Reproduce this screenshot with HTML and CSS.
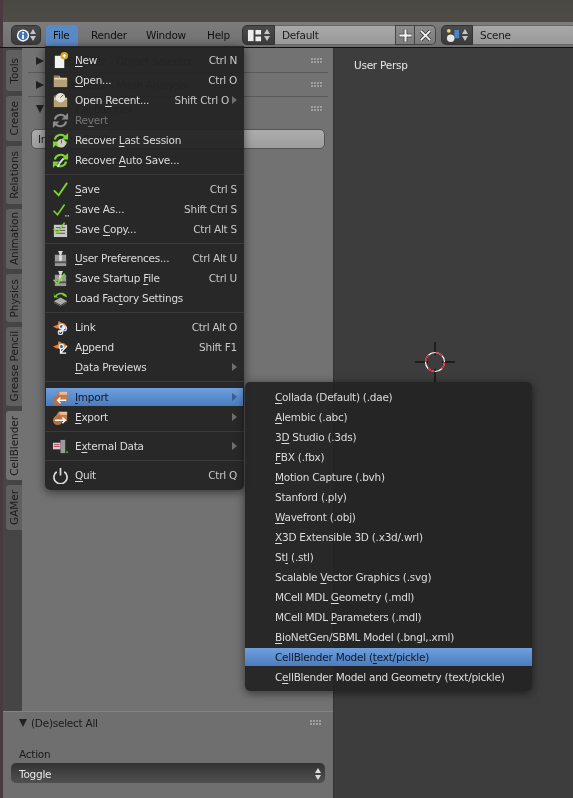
FILE: index.html
```html
<!DOCTYPE html>
<html lang="en">
<head>
  <meta charset="UTF-8">
  <title>Blender - File Import menu</title>
  <link rel="stylesheet" href="styles.css">
</head>
<body>
  <!-- shared icons -->
  <svg class="defs" width="0" height="0">
    <defs>
      <symbol id="check" viewBox="0 0 18 18"><path d="M2 10l5 5 9-13" fill="none" stroke="#7bd52c" stroke-width="2"/></symbol>
      <symbol id="folder" viewBox="0 0 18 18"><path d="M2 4h6l1 2h7v10H2z" fill="#e3d2a6"/><path d="M2 8h14v8H2z" fill="#b5a178"/><path d="M2 4h6v2H2z" fill="#8c7c5c"/></symbol>
      <symbol id="arrows" viewBox="0 0 18 18"><path d="M3 8A6.5 6.5 0 0 1 14 5" fill="none" stroke="currentColor" stroke-width="2.2"/><path d="M17 1v7h-7z" fill="currentColor"/><path d="M15 10A6.5 6.5 0 0 1 4 13" fill="none" stroke="currentColor" stroke-width="2.2"/><path d="M1 17v-7h7z" fill="currentColor"/></symbol>
      <symbol id="device" viewBox="0 0 18 18"><path d="M3 5h12v12H3z" fill="#9a9a9a"/><path d="M3 12h12v2H3z" fill="#555"/><path d="M7 1l2 5 2-5M8 6h2v5H8z" stroke="#ddd" fill="#ddd"/></symbol>
      <symbol id="blend" viewBox="0 0 18 18"><path d="M1 8l5-2 1-4 3 2c4 0 6 3 5 6H5z" fill="#e87d2b"/><circle cx="10" cy="8" r="3" fill="#eee"/><circle cx="10" cy="8" r="1.6" fill="#2f5f9e"/></symbol>
      <symbol id="box" viewBox="0 0 18 18"><path d="M3 9l4-6h9v10H7z" fill="#c77b4a"/><path d="M8 3h8v3H8z" fill="#eac09c"/><circle cx="6" cy="12" r="5" fill="#b8703f"/></symbol>
    </defs>
  </svg>

  <div class="top-strip"></div>

  <header class="header">
    <div class="switch switch-first">
      <svg class="sw-icon" viewBox="0 0 16 16"><circle cx="8" cy="8" r="7" fill="#fff"/><circle cx="8" cy="8" r="5.4" fill="#3f74b5"/><path d="M7 7h2v5H7zM7 4h2v2H7z" fill="#fff"/></svg>
      <span class="updown"><i class="up"></i><i class="down"></i></span>
    </div>
    <nav class="topmenu">
      <span class="topitem active">File</span>
      <span class="topitem item-render">Render</span>
      <span class="topitem item-window">Window</span>
      <span class="topitem item-help">Help</span>
    </nav>
    <div class="switch switch-layout">
      <svg class="sw-icon" viewBox="0 0 16 16"><path d="M1 2h6v12H1z" fill="#eee"/><path d="M9 2h6v5H9zM9 9h6v5H9z" fill="#eee"/></svg>
      <span class="updown"><i class="up"></i><i class="down"></i></span>
    </div>
    <div class="field field-layout">Default</div>
    <div class="square">
      <svg viewBox="0 0 14 14"><path d="M5.5 0h3v5.5H14v3H8.500V14h-3V8.500H0v-3h5.500z" fill="#f2f2f2" stroke="#333" stroke-width=".7"/></svg>
    </div>
    <div class="square square-end">
      <svg viewBox="0 0 14 14"><path d="M2 2l10 10M12 2L2 12" stroke="#333" stroke-width="3.6"/><path d="M2 2l10 10M12 2L2 12" stroke="#f2f2f2" stroke-width="2"/></svg>
    </div>
    <div class="switch switch-scene">
      <svg class="sw-icon" viewBox="0 0 16 16"><circle cx="3" cy="3" r="2" fill="#e6df6a"/><path d="M9 2h5v9H9z" fill="#4a86d0"/><circle cx="5" cy="11" r="4" fill="#e8e8e8"/></svg>
      <span class="updown"><i class="up"></i><i class="down"></i></span>
    </div>
    <div class="field field-scene">Scene</div>
  </header>

  <main class="workspace">
    <div class="edge"></div>
    <section class="left">
      <div class="upper">
        <div class="tabs">
          <div class="tab tab-tools"><span>Tools</span></div>
          <div class="tab tab-create"><span>Create</span></div>
          <div class="tab tab-relations"><span>Relations</span></div>
          <div class="tab tab-animation"><span>Animation</span></div>
          <div class="tab tab-physics"><span>Physics</span></div>
          <div class="tab tab-grease"><span>Grease Pencil</span></div>
          <div class="tab tab-cell current"><span>CellBlender</span></div>
          <div class="tab tab-gamer"><span>GAMer</span></div>
        </div>
        <div class="panels">
          <div class="panel-row">
            <i class="tri-right"></i><span>CellBlender - Object Selector</span><b class="grip"></b>
          </div>
          <div class="panel-row">
            <i class="tri-right"></i><span>CellBlender - Mesh Analysis</span><b class="grip"></b>
          </div>
          <div class="panel-row no-line">
            <i class="tri-down"></i><span class="cell-title">CellBlender</span><b class="grip"></b>
          </div>
          <div class="init-btn">Initialize CellBlender</div>
        </div>
      </div>
      <div class="redo">
        <div class="redo-title"><i class="tri-down"></i><span>(De)select All</span><b class="grip"></b></div>
        <div class="redo-label">Action</div>
        <div class="select">
          <span>Toggle</span>
          <span class="updown light"><i class="up"></i><i class="down"></i></span>
        </div>
      </div>
    </section>
    <section class="viewport">
      <div class="persp">User Persp</div>
      <svg class="cursor3d" width="40" height="40" viewBox="0 0 40 40">
        <path d="M20 0v13M20 27v13M0 20h13M27 20h13" stroke="#000"/>
        <circle cx="20" cy="20" r="9.5" fill="none" stroke="#fff" stroke-width="1.2"/>
        <circle cx="20" cy="20" r="9.5" fill="none" stroke="#e0102c" stroke-width="1.2" stroke-dasharray="7.5 7.5"/>
      </svg>
    </section>
  </main>

  <div class="menu file-menu">
    <div class="row"><svg class="ico" viewBox="0 0 18 18"><path d="M3 4h10v13H3z" fill="#f2f2f2"/><circle cx="13" cy="4" r="4" fill="#d9a520"/><path d="M12.400 2h1.200v1.400H15v1.200h-1.400V6h-1.200V4.600H11V3.400h1.400z" fill="#fff"/></svg><span class="lbl"><u>N</u>ew</span><span class="key">Ctrl N</span></div>
    <div class="row"><svg class="ico"><use href="#folder"/></svg><span class="lbl"><u>O</u>pen...</span><span class="key">Ctrl O</span></div>
    <div class="row"><svg class="ico" viewBox="0 0 18 18"><use href="#folder" width="18" height="18"/><circle cx="9" cy="6" r="5" fill="#e8e4da"/><path d="M9 6l3-3" stroke="#a33"/></svg><span class="lbl">Open <u>R</u>ecent...</span><span class="key">Shift Ctrl O</span><i class="more"></i></div>
    <div class="row dim"><svg class="ico grey"><use href="#arrows"/></svg><span class="lbl">Re<u>v</u>ert</span></div>
    <div class="row"><svg class="ico green" viewBox="0 0 18 18"><use href="#arrows" width="18" height="18"/><circle cx="10" cy="12" r="4.500" fill="#cfcac0"/><path d="M10 12V8.500" stroke="#a33"/></svg><span class="lbl">Recover <u>L</u>ast Session</span></div>
    <div class="row"><svg class="ico green" viewBox="0 0 18 18"><use href="#arrows" width="18" height="18"/><path d="M12 7l-4 5-2 4" stroke="#ddd" stroke-width="2" fill="none"/></svg><span class="lbl">Recover <u>A</u>uto Save...</span></div>
    <div class="sep"></div>
    <div class="row"><svg class="ico"><use href="#check"/></svg><span class="lbl"><u>S</u>ave</span><span class="key">Ctrl S</span></div>
    <div class="row"><svg class="ico" viewBox="0 0 18 18"><use href="#check" width="15" height="15" y="2"/><path d="M14 15h1.400v1.400H14zM16.600 15H18v1.400h-1.400z" fill="#ddd"/></svg><span class="lbl">Save As...</span><span class="key">Shift Ctrl S</span></div>
    <div class="row"><svg class="ico" viewBox="0 0 18 18"><path d="M2 4h14v13H2z" fill="#c9c9c9"/><path d="M4 7h10M4 10h10M4 13h10" stroke="#555"/><use href="#check" width="15" height="15"/></svg><span class="lbl">Save <u>C</u>opy...</span><span class="key">Ctrl Alt S</span></div>
    <div class="sep"></div>
    <div class="row"><svg class="ico"><use href="#device"/></svg><span class="lbl"><u>U</u>ser Preferences...</span><span class="key">Ctrl Alt U</span></div>
    <div class="row"><svg class="ico" viewBox="0 0 18 18"><use href="#device" width="18" height="18"/><use href="#check" width="15" height="15" y="2"/></svg><span class="lbl">Save Startup <u>F</u>ile</span><span class="key">Ctrl U</span></div>
    <div class="row"><svg class="ico green" viewBox="0 0 18 18"><path d="M2 12l7-4 7 4-7 4z" fill="#aaa"/><path d="M2 13l7 4 7-4" stroke="#666" fill="none"/><path d="M3 7c1-4 8-6 12-2l1 3-4-2-1-1c-2-1-5 0-6 2l2 1H2V3z" fill="currentColor"/></svg><span class="lbl">Load Fac<u>t</u>ory Settings</span></div>
    <div class="sep"></div>
    <div class="row"><svg class="ico" viewBox="0 0 18 18"><use href="#blend" width="18" height="18"/><path d="M8 14l6-5" stroke="#fff" stroke-width="2"/><circle cx="13" cy="10" r="2.400" fill="none" stroke="#dde" stroke-width="1.200"/><circle cx="9" cy="14" r="2.400" fill="none" stroke="#dde" stroke-width="1.200"/></svg><span class="lbl">Link</span><span class="key">Ctrl Alt O</span></div>
    <div class="row"><svg class="ico" viewBox="0 0 18 18"><use href="#blend" width="18" height="18"/><path d="M16 7l-7 8M9 10v5h6" stroke="#fff" stroke-width="1.400" fill="none"/></svg><span class="lbl">A<u>p</u>pend</span><span class="key">Shift F1</span></div>
    <div class="row"><span class="ico"></span><span class="lbl"><u>D</u>ata Previews</span><i class="more"></i></div>
    <div class="sep tall"></div>
    <div class="row hl"><svg class="ico" viewBox="0 0 18 18"><use href="#box" width="18" height="18"/><path d="M15 12H6M9 9l-3 3 3 3" stroke="#fff" stroke-width="1.600" fill="none"/></svg><span class="lbl"><u>I</u>mport</span><i class="more"></i></div>
    <div class="row"><svg class="ico" viewBox="0 0 18 18"><use href="#box" width="18" height="18"/><path d="M3 12h11M11 9l3 3-3 3" stroke="#fff" stroke-width="1.600" fill="none"/></svg><span class="lbl"><u>E</u>xport</span><i class="more"></i></div>
    <div class="sep"></div>
    <div class="row"><svg class="ico" viewBox="0 0 18 18"><path d="M1 5h8v7H1z" fill="#cfcfcf"/><path d="M2 7h6M2 9h6" stroke="#b5465a"/><path d="M9 2h5v14H9z" fill="#9a9a9a"/><path d="M15 14h2v2h-2z" fill="#3fae3f"/></svg><span class="lbl">E<u>x</u>ternal Data</span><i class="more"></i></div>
    <div class="sep"></div>
    <div class="row"><svg class="ico" viewBox="0 0 18 18"><path d="M5 5a7 7 0 1 0 8 0" fill="none" stroke="#ddd" stroke-width="1.800"/><path d="M9 1v8" stroke="#ddd" stroke-width="1.800"/></svg><span class="lbl"><u>Q</u>uit</span><span class="key">Ctrl Q</span></div>
  </div>

  <div class="menu import-menu">
    <div class="row"><span class="lbl"><u>C</u>ollada (Default) (.dae)</span></div>
    <div class="row"><span class="lbl"><u>A</u>lembic (.abc)</span></div>
    <div class="row"><span class="lbl">3<u>D</u> Studio (.3ds)</span></div>
    <div class="row"><span class="lbl"><u>F</u>BX (.fbx)</span></div>
    <div class="row"><span class="lbl"><u>M</u>otion Capture (.bvh)</span></div>
    <div class="row"><span class="lbl">Stanford (.ply)</span></div>
    <div class="row"><span class="lbl"><u>W</u>avefront (.obj)</span></div>
    <div class="row"><span class="lbl"><u>X</u>3D Extensible 3D (.x3d/.wrl)</span></div>
    <div class="row"><span class="lbl">St<u>l</u> (.stl)</span></div>
    <div class="row"><span class="lbl">Scalable <u>V</u>ector Graphics (.svg)</span></div>
    <div class="row"><span class="lbl">MCell MDL <u>G</u>eometry (.mdl)</span></div>
    <div class="row"><span class="lbl">MCell MDL <u>P</u>arameters (.mdl)</span></div>
    <div class="row"><span class="lbl"><u>B</u>ioNetGen/SBML Model (.bngl,.xml)</span></div>
    <div class="row hl"><span class="lbl">CellBlender Model (<u>t</u>ext/pickle)</span></div>
    <div class="row"><span class="lbl">C<u>e</u>llBlender Model and Geometry (text/pickle)</span></div>
  </div>
</body>
</html>
```

FILE: styles.css
```css
* {
  box-sizing: border-box;
}

body {
  position: relative;
  width: 573px;
  height: 798px;
  margin: 0;
  overflow: hidden;
  background-color: #3d3d3d;
  font-family: "DejaVu Sans", sans-serif;
  font-size: 10.5px;
  letter-spacing: -0.25px;
  color: #1a1a1a;
  filter: blur(0.35px);
}

.defs {
  position: absolute;
}

.top-strip {
  height: 22px;
  background: linear-gradient(#4a4844, #4e4c45);
  border-left: 3px solid #4a3a40;
}

.header {
  display: flex;
  align-items: flex-start;
  height: 26px;
  padding: 3px 0 0 11px;
  background: linear-gradient(#7c7c7c, #707070);
  border-bottom: 1px solid #111;
  box-shadow: inset 3px 0 0 #4a3a40;
}

.switch {
  display: flex;
  align-items: center;
  justify-content: space-between;
  height: 20px;
  padding: 0 4px;
  background: linear-gradient(#4a4a4a, #3a3a3a);
  border: 1px solid #333;
}

.switch-first {
  width: 30px;
  border-radius: 5px;
}

.switch-layout {
  width: 33px;
  border-radius: 5px 0 0 5px;
}

.switch-scene {
  width: 32px;
  margin-left: 5px;
  border-radius: 5px 0 0 5px;
}

.sw-icon {
  width: 15px;
  height: 15px;
}

.updown {
  display: flex;
  flex-direction: column;
  gap: 2px;
}

.up,
.down {
  display: block;
  width: 0;
  height: 0;
  border-left: 3px solid transparent;
  border-right: 3px solid transparent;
}

.up {
  border-bottom: 5px solid #c4c4c4;
}

.down {
  border-top: 5px solid #c4c4c4;
}

.topmenu {
  display: flex;
  margin-left: 5px;
}

.topitem {
  height: 22px;
  padding: 4px 0 0 10px;
  color: #111;
  white-space: nowrap;
}

.item-render {
  width: 58px;
  padding-left: 13px;
}

.item-window {
  width: 61px;
}

.item-help {
  width: 45px;
}

.topitem.active {
  width: 32px;
  padding: 4px 0 0 7px;
  background: #5a8ac6;
  border-radius: 4px 4px 0 0;
}

.field {
  height: 20px;
  padding: 3px 0 0 7px;
  background: linear-gradient(#a8a8a8, #999);
  border-top: 1px solid #666;
  border-bottom: 1px solid #666;
  color: #1a1a1a;
}

.field-layout {
  width: 120px;
}

.field-scene {
  flex: 1;
  padding-left: 7px;
}

.square {
  display: flex;
  align-items: center;
  justify-content: center;
  width: 20px;
  height: 20px;
  background: linear-gradient(#8c8c8c, #7c7c7c);
  border: 1px solid #444;
}

.square svg {
  width: 13px;
  height: 13px;
}

.square-end {
  width: 21px;
  border-left: 0;
  border-radius: 0 5px 5px 0;
}

.workspace {
  display: flex;
  height: 750px;
}

.edge {
  width: 3px;
  background-color: #4a3a40;
}

.left {
  display: flex;
  flex-direction: column;
  width: 330px;
}

.upper {
  display: flex;
  flex: 1;
  min-height: 0;
}

.tabs {
  display: flex;
  flex-direction: column;
  width: 19px;
  padding: 2px 0 0 3px;
  background-color: #454545;
}

.tab {
  display: flex;
  align-items: center;
  justify-content: center;
  width: 16px;
  margin-bottom: 5px;
  background-color: #5f5f5f;
  border-radius: 3px 0 0 3px;
}

.tab span {
  writing-mode: vertical-rl;
  transform: rotate(180deg);
  letter-spacing: -0.05px;
  color: #1c1c1c;
  white-space: nowrap;
}

.tab.current {
  background-color: #727272;
}

.tab-tools { height: 41px; }
.tab-create { height: 45px; }
.tab-relations { height: 58px; }
.tab-animation { height: 60px; }
.tab-physics { height: 48px; }
.tab-grease { height: 79px; }
.tab-cell { height: 69px; }
.tab-gamer { height: 45px; }

.panels {
  flex: 1;
  padding: 1px 5px 0 6px;
  background-color: #727272;
}

.panel-row {
  display: flex;
  align-items: center;
  height: 24px;
  padding: 0 5px 0 8px;
  border-bottom: 1px solid #595959;
  color: #222;
}

.panel-row.no-line {
  border-bottom: 0;
}

.panel-row span {
  margin-left: 5px;
}

.panel-row .cell-title {
  margin-left: 31px;
}

.tri-right {
  width: 0;
  height: 0;
  border-top: 4px solid transparent;
  border-bottom: 4px solid transparent;
  border-left: 8px solid #222;
}

.tri-down {
  width: 0;
  height: 0;
  border-left: 4px solid transparent;
  border-right: 4px solid transparent;
  border-top: 8px solid #222;
}

.grip {
  width: 12px;
  height: 6px;
  margin-left: auto;
  background-image: radial-gradient(circle at 1px 1px, #a0a0a0 0.7px, transparent 0.9px);
  background-size: 3px 3px;
}

.init-btn {
  height: 20px;
  margin: 8px 3px 0 3px;
  padding: 3px 0 0 6px;
  background: linear-gradient(#adadad, #9d9d9d);
  border: 1px solid #555;
  border-radius: 5px;
  color: #222;
}

.redo {
  height: 87px;
  padding: 0 8px;
  background-color: #6f6f6f;
  border-top: 1px solid #838383;
}

.redo-title {
  display: flex;
  align-items: center;
  height: 22px;
  padding: 0 3px 0 8px;
  color: #1a1a1a;
}

.redo-title span {
  margin-left: 4px;
}

.redo-label {
  height: 15px;
  margin: 14px 0 0 8px;
  color: #1a1a1a;
}

.select {
  display: flex;
  align-items: center;
  justify-content: space-between;
  width: 314px;
  height: 20px;
  padding: 1px 4px 0 8px;
  background: linear-gradient(#333, #505050);
  border-radius: 5px;
  color: #e6e6e6;
}

.updown.light .up,
.updown.light .down {
  border-bottom-color: #ddd;
  border-top-color: #ddd;
}

.viewport {
  position: relative;
  flex: 1;
  padding: 11px 0 0 20px;
  background-color: #3d3d3d;
  border-left: 1px solid #333;
  color: #e6e6e6;
}

.cursor3d {
  position: absolute;
  left: 81px;
  top: 294px;
}

.menu {
  position: absolute;
  background-color: rgba(36, 36, 36, 0.95);
  border-radius: 5px;
  box-shadow: 0 2px 10px rgba(0, 0, 0, 0.55);
  color: #dcdcdc;
}

.file-menu {
  left: 45px;
  top: 46px;
  width: 199px;
  height: 444px;
  padding-top: 4px;
  border-radius: 0 0 5px 5px;
}

.import-menu {
  left: 245px;
  top: 382px;
  width: 287px;
  height: 309px;
  padding-top: 5px;
}

.row {
  display: flex;
  align-items: center;
  height: 20px;
  padding: 0 7px 0 7px;
  white-space: nowrap;
}

.import-menu .row {
  padding-left: 30px;
}

.row u {
  text-underline-offset: 2px;
}

.row.hl {
  height: 18px;
  margin: 1px 0;
  background: linear-gradient(#6f9fdc, #4a7cbf);
  color: #101828;
}

.file-menu .row.hl {
  margin: 1px 1px;
  padding-left: 6px;
  padding-right: 6px;
}

.row.dim {
  color: #777;
}

.sep {
  height: 9px;
  padding-top: 4px;
}

.sep.tall {
  height: 10px;
}

.sep::before {
  content: "";
  display: block;
  height: 1px;
  background-color: #3a3a3a;
}

.ico {
  flex: none;
  width: 17px;
  height: 17px;
  margin-right: 6px;
}

.grey {
  color: #8a8a8a;
}

.green {
  color: #7bd52c;
}

.key {
  margin-left: auto;
  color: #c8c8c8;
}

.more {
  width: 0;
  height: 0;
  margin-left: auto;
  border-top: 4px solid transparent;
  border-bottom: 4px solid transparent;
  border-left: 5px solid #6e6e6e;
}

.key + .more {
  margin-left: 3px;
}

.row.hl .more {
  border-left-color: #3a5f90;
}
```
